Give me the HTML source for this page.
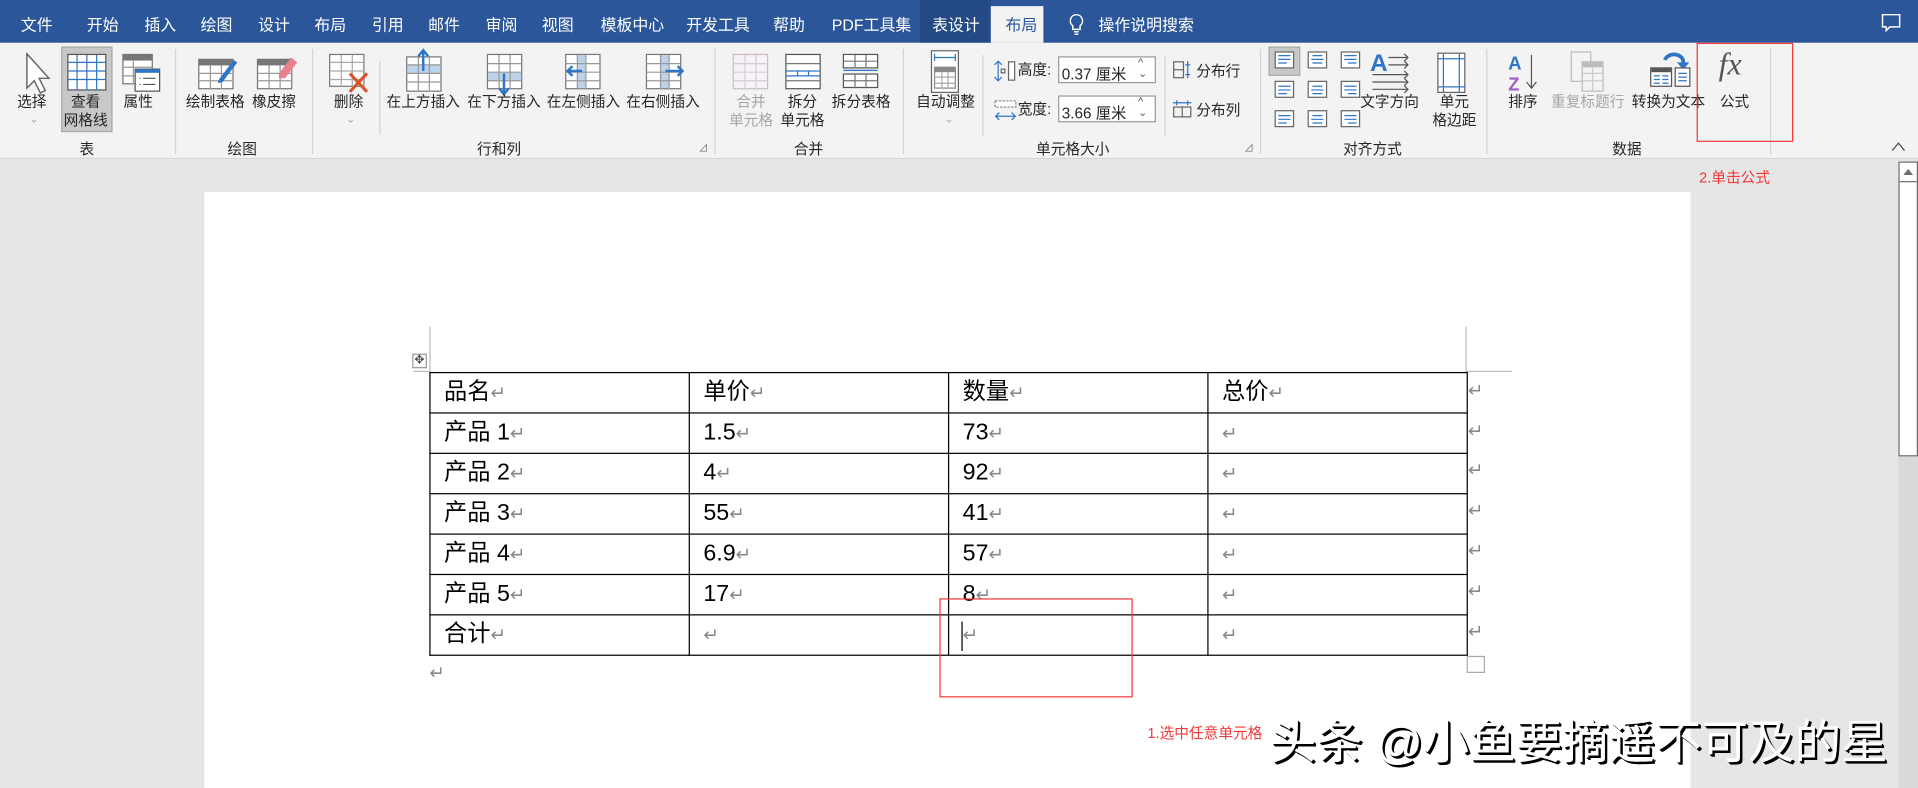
<!DOCTYPE html>
<html><head><meta charset="utf-8">
<style>
*{margin:0;padding:0;box-sizing:border-box}
html,body{width:1918px;height:788px;overflow:hidden;background:#e6e6e6}
#s{position:absolute;left:0;top:0;width:1568px;height:644px;transform:scale(1.22321,1.2236);transform-origin:0 0;font-family:"Liberation Sans","Noto Sans CJK SC",sans-serif;color:#262626}
.a{position:absolute;white-space:nowrap}
.tab{position:absolute;top:10px;font-size:13px;color:#fff}
.lb{position:absolute;font-size:12px;color:#262626;text-align:center;line-height:15px;white-space:nowrap}
.gl{position:absolute;top:113px;font-size:12px;color:#262626}
.sep{position:absolute;top:40px;width:1px;height:86px;background:#d4d4d4}
.gr{color:#a6a6a6}
svg{position:absolute;overflow:visible}
td{border:1px solid #000;height:33px;width:212px;font-size:19px;padding:0 0 0 11px;vertical-align:top;padding-top:4px;color:#000;line-height:24px}
.rt{color:#888;font-size:15px}
.rm{position:absolute;left:1200px;color:#888;font-size:15px}
</style></head><body><div id="s">
<!-- tab bar -->
<div class="a" style="left:0;top:0;width:1568px;height:35px;background:#2b579a"></div>
<div class="a" style="left:752px;top:0;width:58px;height:35px;background:#234a85"></div>
<div class="a" style="left:810px;top:5px;width:43px;height:30px;background:#f3f3f3"></div>
<span class="tab" style="left:17px">文件</span>
<span class="tab" style="left:71px">开始</span>
<span class="tab" style="left:118px">插入</span>
<span class="tab" style="left:164px">绘图</span>
<span class="tab" style="left:211px">设计</span>
<span class="tab" style="left:257px">布局</span>
<span class="tab" style="left:304px">引用</span>
<span class="tab" style="left:350px">邮件</span>
<span class="tab" style="left:397px">审阅</span>
<span class="tab" style="left:443px">视图</span>
<span class="tab" style="left:491px">模板中心</span>
<span class="tab" style="left:561px">开发工具</span>
<span class="tab" style="left:632px">帮助</span>
<span class="tab" style="left:680px">PDF工具集</span>
<span class="tab" style="left:762px">表设计</span>
<span class="tab" style="left:822px;color:#2b579a">布局</span>
<svg style="left:873px;top:11px" width="14" height="18" viewBox="0 0 14 18"><path d="M7 1a5 5 0 0 0-3 9v3h6v-3a5 5 0 0 0-3-9zM5 15h4M5.5 17h3" fill="none" stroke="#fff" stroke-width="1.2"/></svg>
<span class="tab" style="left:898px">操作说明搜索</span>
<svg style="left:1538px;top:11px" width="16" height="16" viewBox="0 0 16 16"><path d="M1 1h14v10H7l-3 3v-3H1z" fill="none" stroke="#fff" stroke-width="1.2"/></svg>
<!-- ribbon -->
<div class="a" style="left:0;top:35px;width:1568px;height:95px;background:#f3f3f3;border-bottom:1px solid #d6d6d6"></div>
<!-- 表 group -->
<svg style="left:20px;top:43px" width="22" height="36" viewBox="0 0 22 36"><path d="M2 1v28l6-6 5 10 4-2-5-10h8z" fill="#fff" stroke="#666" stroke-width="1.2"/></svg>
<div class="lb" style="left:14px;top:76px">选择</div><div class="lb gr" style="left:24px;top:90px;font-size:9px">⌄</div>
<div class="a" style="left:50px;top:38px;width:42px;height:70px;background:#c8c8c8;border:1px solid #a8a8a8"></div>
<svg style="left:55px;top:44px" width="32" height="30"><rect x=".5" y=".5" width="31" height="29" fill="#fff" stroke="#555"/><path d="M.5 7h31M.5 14h31M.5 21h31M8 1v29M16 1v29M24 1v29" stroke="#2e75c7"/></svg>
<div class="lb" style="left:52px;top:76px">查看<br>网格线</div>
<svg style="left:100px;top:44px" width="32" height="32"><rect x=".5" y=".5" width="24" height="24" fill="#fff" stroke="#777"/><rect x=".5" y=".5" width="24" height="5" fill="#777"/><path d="M.5 11h24M.5 18h24M9 5v20" stroke="#999"/><rect x="10.5" y="12.5" width="20" height="18" fill="#fff" stroke="#555"/><rect x="10.5" y="12.5" width="20" height="3" fill="#2e75c7"/><path d="M14 20h1M17 20h10M14 25h1M17 25h10" stroke="#555"/></svg>
<div class="lb" style="left:101px;top:76px">属性</div>
<div class="gl" style="left:65px">表</div>
<div class="sep" style="left:143px"></div>
<!-- 绘图 -->
<svg style="left:162px;top:44px" width="36" height="30"><rect x=".5" y="4.5" width="28" height="24" fill="#fff" stroke="#777"/><rect x=".5" y="4.5" width="28" height="5" fill="#777"/><path d="M.5 16h28M.5 22h28M10 9v20M19 9v20" stroke="#999"/><path d="M17 21l12-16 3 2-12 16-4 1z" fill="#2e75c7"/></svg>
<div class="lb" style="left:152px;top:76px">绘制表格</div>
<svg style="left:210px;top:44px" width="36" height="30"><rect x=".5" y="4.5" width="28" height="24" fill="#fff" stroke="#777"/><rect x=".5" y="4.5" width="28" height="5" fill="#777"/><path d="M.5 16h28M.5 22h28M10 9v20M19 9v20" stroke="#999"/><path d="M18 16l10-13 5 4-10 13-5 0z" fill="#e8808e"/></svg>
<div class="lb" style="left:206px;top:76px">橡皮擦</div>
<div class="gl" style="left:186px">绘图</div>
<div class="sep" style="left:255px"></div>
<!-- 行和列 -->
<svg style="left:269px;top:44px" width="34" height="34"><rect x=".5" y=".5" width="28" height="26" fill="#fff" stroke="#777"/><path d="M.5 7h28M.5 14h28M.5 21h28M10 1v26M19 1v26" stroke="#aaa"/><path d="M17 16l14 15M31 16l-14 15" stroke="#d9542b" stroke-width="2.5"/></svg>
<div class="lb" style="left:273px;top:76px">删除</div><div class="lb gr" style="left:283px;top:90px;font-size:9px">⌄</div>
<div class="sep" style="left:310px;top:50px;height:60px"></div>
<svg style="left:332px;top:40px" width="30" height="36"><rect x=".5" y="6.5" width="28" height="28" fill="#fff" stroke="#777"/><rect x="1" y="13" width="27" height="7" fill="#bcd3ea"/><path d="M.5 13h28M.5 20h28M.5 27h28M10 7v28M19 7v28" stroke="#999"/><path d="M14 18V2M10 6l4-5 4 5" stroke="#2e75c7" stroke-width="2" fill="none"/></svg>
<div class="lb" style="left:316px;top:76px">在上方插入</div>
<svg style="left:398px;top:44px" width="30" height="36"><rect x=".5" y=".5" width="28" height="28" fill="#fff" stroke="#777"/><rect x="1" y="15" width="27" height="7" fill="#bcd3ea"/><path d="M.5 8h28M.5 15h28M.5 22h28M10 1v28M19 1v28" stroke="#999"/><path d="M14 16v16M10 28l4 5 4-5" stroke="#2e75c7" stroke-width="2" fill="none"/></svg>
<div class="lb" style="left:382px;top:76px">在下方插入</div>
<svg style="left:462px;top:44px" width="32" height="30"><rect x=".5" y=".5" width="28" height="28" fill="#fff" stroke="#777"/><rect x="10" y="1" width="7" height="27" fill="#bcd3ea"/><path d="M.5 8h28M.5 15h28M.5 22h28M10 1v28M17 1v28" stroke="#999"/><path d="M14 14H2M6 10l-4 4 4 4" stroke="#2e75c7" stroke-width="2" fill="none"/></svg>
<div class="lb" style="left:447px;top:76px">在左侧插入</div>
<svg style="left:528px;top:44px" width="32" height="30"><rect x=".5" y=".5" width="28" height="28" fill="#fff" stroke="#777"/><rect x="12" y="1" width="7" height="27" fill="#bcd3ea"/><path d="M.5 8h28M.5 15h28M.5 22h28M12 1v28M19 1v28" stroke="#999"/><path d="M16 14h14M26 10l4 4-4 4" stroke="#2e75c7" stroke-width="2" fill="none"/></svg>
<div class="lb" style="left:512px;top:76px">在右侧插入</div>
<div class="gl" style="left:390px">行和列</div>
<div class="a" style="left:571px;top:116px;font-size:8px;color:#666">⊿</div>
<div class="sep" style="left:584px"></div>
<!-- 合并 -->
<svg style="left:599px;top:44px" width="30" height="30"><rect x=".5" y=".5" width="28" height="28" fill="#f7f2f6" stroke="#c9bcc6"/><path d="M.5 8h28M.5 15h28M.5 22h28M10 1v28M19 1v28" stroke="#d6ccd4"/></svg>
<div class="lb gr" style="left:596px;top:76px">合并<br>单元格</div>
<svg style="left:642px;top:44px" width="30" height="30"><rect x=".5" y=".5" width="28" height="28" fill="#fff" stroke="#555"/><path d="M.5 8h28M.5 22h28" stroke="#777"/><path d="M.5 14h28M.5 18h28M10 14v4M19 14v4" stroke="#2e75c7"/></svg>
<div class="lb" style="left:638px;top:76px">拆分<br>单元格</div>
<svg style="left:689px;top:44px" width="30" height="30"><rect x=".5" y=".5" width="28" height="11" fill="#fff" stroke="#555"/><rect x=".5" y="16.5" width="28" height="11" fill="#fff" stroke="#555"/><path d="M.5 6h28M10 1v11M19 1v11M.5 22h28M10 17v11M19 17v11" stroke="#777"/><path d="M.5 13.5h28" stroke="#2e75c7"/></svg>
<div class="lb" style="left:680px;top:76px">拆分表格</div>
<div class="gl" style="left:649px">合并</div>
<div class="sep" style="left:738px"></div>
<!-- 单元格大小 -->
<svg style="left:761px;top:41px" width="24" height="36"><rect x=".5" y=".5" width="22" height="34" fill="#fff" stroke="#666"/><path d="M3 6h17M3 3v6M20 3v6" stroke="#2e75c7"/><rect x="3" y="14" width="17" height="17" fill="#fff" stroke="#888"/><rect x="3" y="14" width="17" height="4" fill="#888"/><path d="M3 22h17M3 27h17M9 18v13M14 18v13" stroke="#aaa"/></svg>
<div class="lb" style="left:749px;top:76px">自动调整</div><div class="lb gr" style="left:772px;top:90px;font-size:9px">⌄</div>
<div class="sep" style="left:803px;top:45px;height:66px"></div>
<svg style="left:813px;top:49px" width="18" height="18"><path d="M3 1v16M0 4l3-3 3 3M0 14l3 3 3-3" stroke="#2e75c7" fill="none"/><rect x="11.5" y="1.5" width="5" height="15" fill="#fff" stroke="#666"/><rect x="5.5" y="7.5" width="3" height="3" fill="none" stroke="#666"/></svg>
<div class="a" style="left:832px;top:48px;font-size:12px">高度:</div>
<div class="a" style="left:865px;top:46px;width:80px;height:22px;background:#fff;border:1px solid #999;font-size:12.5px;padding:3px 0 0 2px">0.37 厘米<span style="position:absolute;right:6px;top:0;font-size:9px;line-height:9px;color:#555">^<br>⌄</span></div>
<svg style="left:813px;top:81px" width="18" height="18"><rect x=".5" y="1.5" width="17" height="5" fill="#fff" stroke="#888" stroke-dasharray="2 1"/><path d="M1 14h16M4 11l-3 3 3 3M14 11l3 3-3 3" stroke="#2e75c7" fill="none"/></svg>
<div class="a" style="left:832px;top:80px;font-size:12px">宽度:</div>
<div class="a" style="left:865px;top:78px;width:80px;height:22px;background:#fff;border:1px solid #999;font-size:12.5px;padding:3px 0 0 2px">3.66 厘米<span style="position:absolute;right:6px;top:0;font-size:9px;line-height:9px;color:#555">^<br>⌄</span></div>
<div class="sep" style="left:952px;top:45px;height:66px"></div>
<svg style="left:959px;top:50px" width="16" height="14"><rect x=".5" y=".5" width="8" height="13" fill="none" stroke="#666"/><path d="M.5 7h8" stroke="#666"/><path d="M12 0v14M10 3h4M10 11h4" stroke="#2e75c7"/></svg>
<div class="a" style="left:978px;top:49px;font-size:12px">分布行</div>
<svg style="left:959px;top:82px" width="16" height="14"><rect x=".5" y="5.5" width="14" height="8" fill="none" stroke="#666"/><path d="M7.5 5v9" stroke="#666"/><path d="M0 2h15M3 0v4M12 0v4" stroke="#2e75c7"/></svg>
<div class="a" style="left:978px;top:81px;font-size:12px">分布列</div>
<div class="gl" style="left:847px">单元格大小</div>
<div class="a" style="left:1017px;top:116px;font-size:8px;color:#666">⊿</div>
<div class="sep" style="left:1030px"></div>
<!-- 对齐方式 -->
<div class="a" style="left:1037px;top:38px;width:26px;height:24px;background:#c8c8c8;border:1px solid #aaa"></div>
<svg style="left:1042px;top:42px" width="70" height="62" viewBox="0 0 70 62">
<g fill="#fff" stroke="#666"><rect x=".5" y=".5" width="15" height="13"/><rect x="27.5" y=".5" width="15" height="13"/><rect x="54.5" y=".5" width="15" height="13"/><rect x=".5" y="24.5" width="15" height="13"/><rect x="27.5" y="24.5" width="15" height="13"/><rect x="54.5" y="24.5" width="15" height="13"/><rect x=".5" y="48.5" width="15" height="13"/><rect x="27.5" y="48.5" width="15" height="13"/><rect x="54.5" y="48.5" width="15" height="13"/></g>
<g stroke="#2e75c7"><path d="M3 3.5h10M3 6.5h10M3 9.5h7M31 3.5h8M30 6.5h10M31 9.5h8M57 3.5h10M57 6.5h10M60 9.5h7"/><path d="M3 28.5h10M3 31.5h10M3 34.5h7M31 28.5h8M30 31.5h10M31 34.5h8M57 28.5h10M57 31.5h10M60 34.5h7"/><path d="M3 52.5h10M3 55.5h10M3 58.5h7M31 52.5h8M30 55.5h10M31 58.5h8M57 52.5h10M57 55.5h10M60 58.5h7"/></g></svg>
<svg style="left:1120px;top:41px" width="34" height="34"><text x="0" y="17" font-family="Liberation Sans" font-weight="bold" font-size="20" fill="#2e75c7">A</text><path d="M15 6h16M15 12h16M2 20h29M2 26h29M2 32h29M28 3l3 3-3 3M28 9l3 3-3 3M28 17l3 3-3 3M28 23l3 3-3 3M28 29l3 3-3 3" stroke="#555" fill="none"/></svg>
<div class="lb" style="left:1112px;top:76px">文字方向</div>
<svg style="left:1175px;top:43px" width="24" height="34"><rect x=".5" y=".5" width="22" height="32" fill="#fff" stroke="#666"/><path d="M5 1v32M18 1v32M1 5h22M1 28h22" stroke="#2e75c7"/></svg>
<div class="lb" style="left:1171px;top:76px">单元<br>格边距</div>
<div class="gl" style="left:1098px">对齐方式</div>
<div class="sep" style="left:1215px"></div>
<!-- 数据 -->
<svg style="left:1233px;top:43px" width="28" height="32"><text x="0" y="14" font-family="Liberation Sans" font-size="15" font-weight="bold" fill="#2e75c7">A</text><text x="0" y="31" font-family="Liberation Sans" font-size="15" font-weight="bold" fill="#9b5fc0">Z</text><path d="M19 2v26M15 24l4 5 4-5" stroke="#555" fill="none"/></svg>
<div class="lb" style="left:1233px;top:76px">排序</div>
<svg style="left:1284px;top:42px" width="30" height="34"><rect x=".5" y=".5" width="16" height="24" fill="#f3f3f3" stroke="#bbb"/><rect x="9.5" y="8.5" width="17" height="24" fill="#f3f3f3" stroke="#bbb"/><rect x="10" y="9" width="16" height="4" fill="#bbb"/><path d="M10 18h16M10 24h16M18 13v20" stroke="#ccc"/></svg>
<div class="lb gr" style="left:1268px;top:76px">重复标题行</div>
<svg style="left:1349px;top:40px" width="34" height="34"><path d="M12 9a8 7 0 0 1 15 0v4" stroke="#2e75c7" stroke-width="3" fill="none"/><path d="M22 11l5 6 5-6z" fill="#2e75c7"/><rect x=".5" y="15.5" width="17" height="15" fill="#fff" stroke="#555"/><rect x="1" y="16" width="16" height="3" fill="#555"/><path d="M3 22h5M10 22h5M3 25h5M10 25h5M3 28h5M10 28h5" stroke="#2e75c7"/><rect x="20.5" y="15.5" width="12" height="15" fill="#fff" stroke="#555"/><path d="M23 20h7M23 23h7M23 26h7" stroke="#2e75c7"/></svg>
<div class="lb" style="left:1334px;top:76px">转换为文本</div>
<div class="a" style="left:1405px;top:38px;font-family:'Liberation Serif',serif;font-style:italic;font-size:26px;color:#555">fx</div>
<div class="lb" style="left:1406px;top:76px">公式</div>
<div class="gl" style="left:1318px">数据</div>
<div class="sep" style="left:1447px"></div>
<svg style="left:1546px;top:116px" width="12" height="8"><path d="M1 7l5-6 5 6" stroke="#444" fill="none"/></svg>
<div class="a" style="left:1387px;top:35px;width:79px;height:81px;border:1px solid #f23a3a"></div>
<div class="a" style="left:1389px;top:136px;font-size:12px;color:#f23a3a">2.单击公式</div>
<!-- scrollbar -->
<div class="a" style="left:1552px;top:132px;width:16px;height:512px;background:#d9d9d9"></div>
<div class="a" style="left:1552px;top:132px;width:16px;height:241px;background:#fff;border:1px solid #6e6e6e"></div>
<div class="a" style="left:1553px;top:148px;width:14px;height:1px;background:#6e6e6e"></div>
<svg style="left:1556px;top:138px" width="8" height="5"><path d="M0 5l4-5 4 5z" fill="#6e6e6e"/></svg>
<!-- page -->
<div class="a" style="left:167px;top:157px;width:1215px;height:487px;background:#fff"></div>
<div class="a" style="left:351px;top:267px;width:1px;height:37px;background:#bbb"></div>
<div class="a" style="left:1198px;top:267px;width:1px;height:37px;background:#bbb"></div>
<div class="a" style="left:338px;top:303px;width:13px;height:1px;background:#bbb"></div>
<div class="a" style="left:1199px;top:303px;width:37px;height:1px;background:#bbb"></div>
<div class="a" style="left:337px;top:289px;width:12px;height:12px;border:1px solid #999;background:#fff;font-size:10px;line-height:10px;text-align:center;color:#444">✥</div>
<table style="position:absolute;left:351px;top:304px;border-collapse:collapse;table-layout:fixed">
<tr><td>品名<span class="rt">↵</span></td><td>单价<span class="rt">↵</span></td><td>数量<span class="rt">↵</span></td><td>总价<span class="rt">↵</span></td></tr>
<tr><td>产品 1<span class="rt">↵</span></td><td>1.5<span class="rt">↵</span></td><td>73<span class="rt">↵</span></td><td><span class="rt">↵</span></td></tr>
<tr><td>产品 2<span class="rt">↵</span></td><td>4<span class="rt">↵</span></td><td>92<span class="rt">↵</span></td><td><span class="rt">↵</span></td></tr>
<tr><td>产品 3<span class="rt">↵</span></td><td>55<span class="rt">↵</span></td><td>41<span class="rt">↵</span></td><td><span class="rt">↵</span></td></tr>
<tr><td>产品 4<span class="rt">↵</span></td><td>6.9<span class="rt">↵</span></td><td>57<span class="rt">↵</span></td><td><span class="rt">↵</span></td></tr>
<tr><td>产品 5<span class="rt">↵</span></td><td>17<span class="rt">↵</span></td><td>8<span class="rt">↵</span></td><td><span class="rt">↵</span></td></tr>
<tr><td>合计<span class="rt">↵</span></td><td><span class="rt">↵</span></td><td><span class="rt">↵</span></td><td><span class="rt">↵</span></td></tr>
</table>
<div class="rm" style="top:310px">↵</div><div class="rm" style="top:343px">↵</div><div class="rm" style="top:375px">↵</div><div class="rm" style="top:408px">↵</div><div class="rm" style="top:441px">↵</div><div class="rm" style="top:474px">↵</div><div class="rm" style="top:507px">↵</div>
<div class="a" style="left:1199px;top:536px;width:15px;height:14px;border:1px solid #aaa;background:#fff"></div>
<div class="a" style="left:351px;top:541px;color:#888;font-size:15px">↵</div>
<div class="a" style="left:786px;top:508px;width:1px;height:24px;background:#000"></div>
<div class="a" style="left:768px;top:489px;width:158px;height:81px;border:1px solid #f23a3a"></div>
<div class="a" style="left:938px;top:590px;font-size:12px;color:#f23a3a">1.选中任意单元格</div>
<div class="a" style="left:1038px;top:576px;font-size:38px;color:#fff;text-shadow:2px 2px 0 #000,1px 1px 0 #000;letter-spacing:0px">头条 @小鱼要摘遥不可及的星</div>
</div></body></html>
